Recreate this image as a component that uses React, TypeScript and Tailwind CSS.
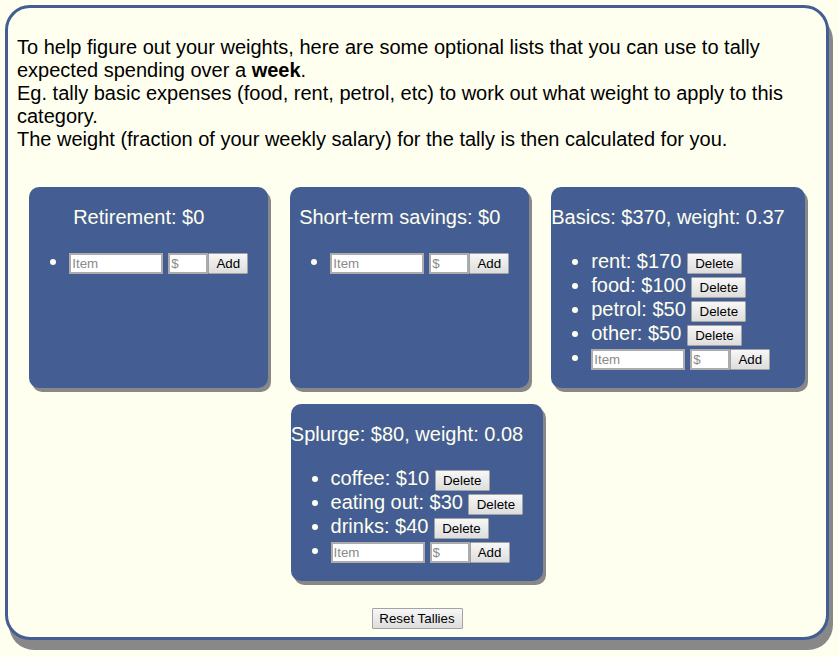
import React from "react";

type Item = { name: string; amount: number };
type Tally = { title: string; items: Item[] };

const tallies: Tally[] = [
  { title: "Retirement: $0", items: [] },
  { title: "Short-term savings: $0", items: [] },
  {
    title: "Basics: $370, weight: 0.37",
    items: [
      { name: "rent", amount: 170 },
      { name: "food", amount: 100 },
      { name: "petrol", amount: 50 },
      { name: "other", amount: 50 },
    ],
  },
  {
    title: "Splurge: $80, weight: 0.08",
    items: [
      { name: "coffee", amount: 10 },
      { name: "eating out", amount: 30 },
      { name: "drinks", amount: 40 },
    ],
  },
];

const btn =
  "inline-block align-baseline border border-[#a3a3a3] bg-gradient-to-b from-[#f7f7f7] to-[#dddddd] py-[2px] text-center text-[13.333px] leading-[15px] text-black rounded-[1px]";

const inp =
  "block h-[21px] border-2 border-[#acacac] bg-white px-[1px] text-[13.333px] text-black placeholder:text-[#8a8a8a] outline-none";

function Card({ t }: { t: Tally }) {
  return (
    <div className="rounded-[10px] bg-[#445e93] text-[#fffff0] pr-[20px] pt-[19px] pb-[19px] shadow-[3px_4px_0_#888]">
      <div className="text-center whitespace-nowrap leading-[23px]">{t.title}</div>
      <ul className="list-disc pl-[40px] mt-[20px] whitespace-nowrap">
        {t.items.map((it) => (
          <li key={it.name} className="h-[24px] leading-[24px]">
            {it.name}: ${it.amount} <button className={btn + " w-[55px]"}>Delete</button>
          </li>
        ))}
        <li className="h-[24px] leading-[24px]">
          <span className="inline-flex items-start align-top h-[24px] pt-[4px]">
            <input placeholder="Item" className={inp + " w-[94px]"} />
            <input placeholder="$" className={inp + " w-[40px] ml-[5px]"} />
            <button className={btn + " w-[40px] h-[21px]"}>Add</button>
          </span>
        </li>
      </ul>
    </div>
  );
}

export default function App() {
  return (
    <div className="min-h-screen bg-[#fffff0] pt-[5px] pl-[5px] pb-[6px] font-['Liberation_Sans',Arial,sans-serif] text-[20px] text-black">
      <div className="w-[824px] rounded-[25px] border-[3px] border-[#445e93] bg-[#fffff0] shadow-[4px_10px_0_#888] px-[9px] pt-[28px] pb-[8px]">
        <div className="leading-[23px]">
          To help figure out your weights, here are some optional lists that you can use to tally expected spending over a{" "}
          <b>week</b>.
          <br />
          Eg. tally basic expenses (food, rent, petrol, etc) to work out what weight to apply to this category.
          <br />
          The weight (fraction of your weekly salary) for the tally is then calculated for you.
        </div>
        <div className="mt-[36px] flex flex-wrap justify-center items-stretch gap-x-[22px] gap-y-[16px]">
          {tallies.map((t) => (
            <Card key={t.title} t={t} />
          ))}
        </div>
        <div className="mt-[27px] flex justify-center">
          <button className={btn + " w-[91px]"}>Reset Tallies</button>
        </div>
      </div>
    </div>
  );
}
